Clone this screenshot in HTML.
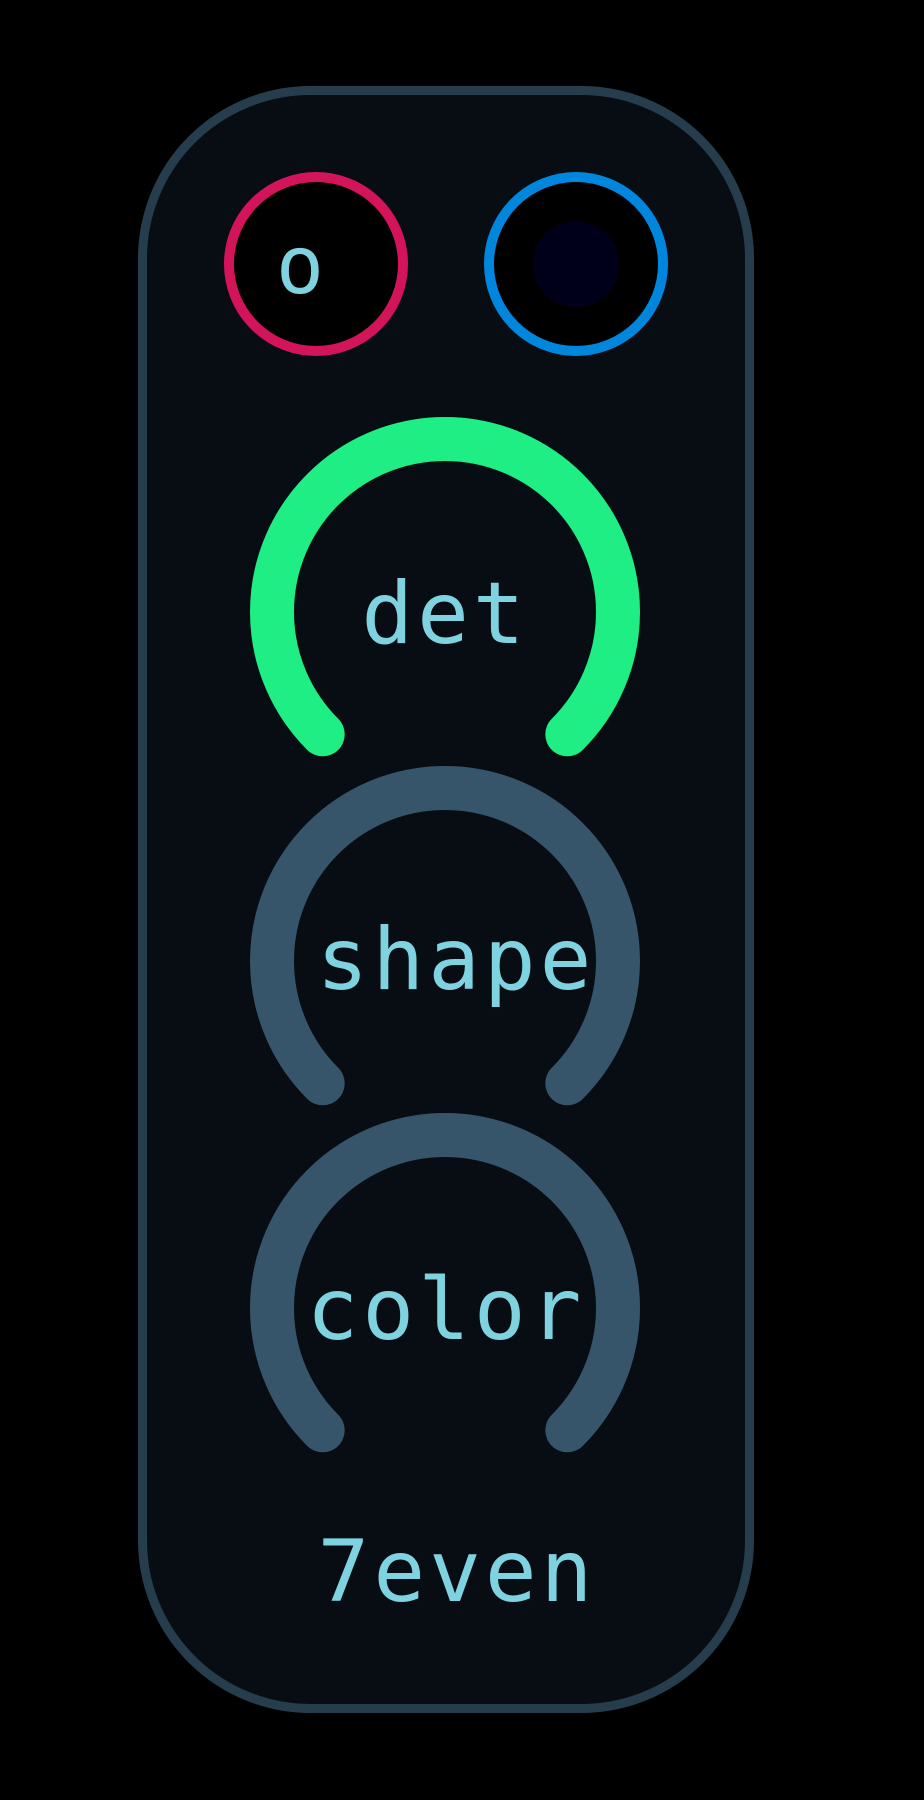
<!DOCTYPE html>
<html><head><meta charset="utf-8"><style>
html,body{margin:0;padding:0;background:#000;width:924px;height:1800px;overflow:hidden}
svg{display:block}
text{font-family:"DejaVu Sans Mono","Liberation Mono",monospace;fill:#7fd3e0;text-anchor:middle;letter-spacing:4px}
</style></head><body>
<svg width="924" height="1800" viewBox="0 0 924 1800">
<rect x="0" y="0" width="924" height="1800" fill="#000"/>
<rect x="142.5" y="90.5" width="607" height="1618" rx="168" fill="#080d14" stroke="#263d4d" stroke-width="9"/>
<circle cx="316" cy="264" r="87" fill="#000" stroke="#d4145a" stroke-width="10"/>
<text x="302" y="293" font-size="80">o</text>
<circle cx="576" cy="264" r="87" fill="#000" stroke="#0086dc" stroke-width="10"/>
<circle cx="576" cy="264" r="43" fill="#00001a"/>
<g fill="none" stroke-width="44" stroke-linecap="round">
<path d="M322.7 734.3 A173 173 0 1 1 567.3 734.3" stroke="#1fee85"/>
<path d="M322.7 1083.3 A173 173 0 1 1 567.3 1083.3" stroke="#36546a"/>
<path d="M322.7 1430.3 A173 173 0 1 1 567.3 1430.3" stroke="#36546a"/>
</g>
<text x="445" y="643" font-size="86">det</text>
<text x="456" y="989" font-size="86">shape</text>
<text x="446" y="1339" font-size="86">color</text>
<text x="457" y="1601" font-size="86">7even</text>
</svg>
</body></html>
